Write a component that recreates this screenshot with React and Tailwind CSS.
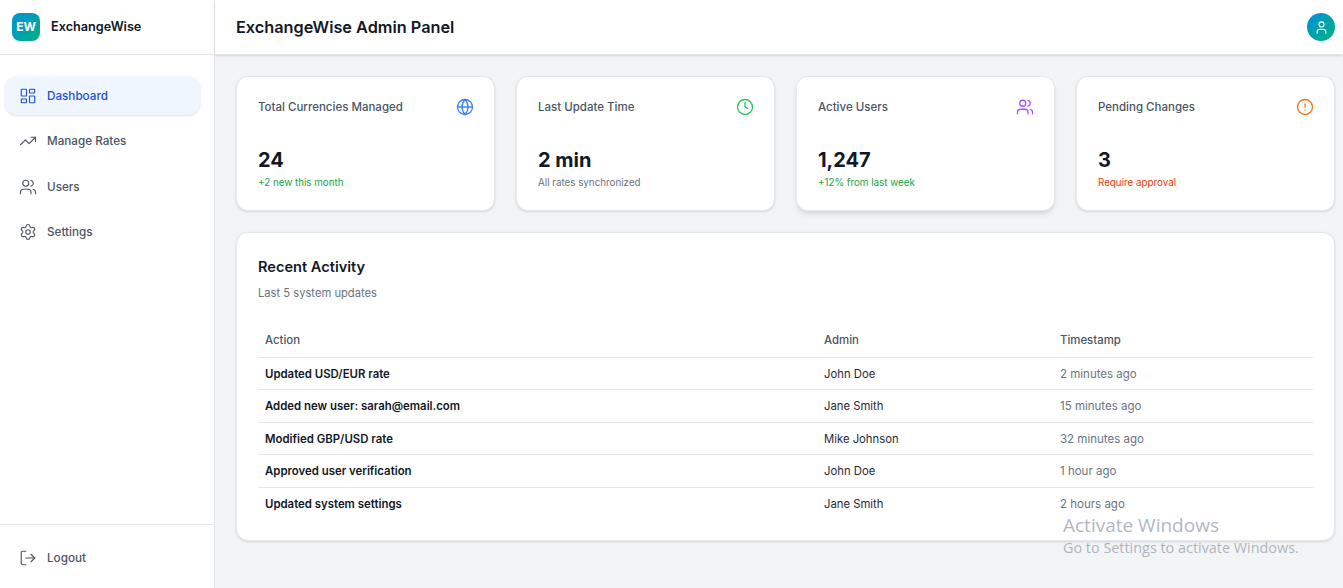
import React from 'react';
import { LayoutDashboard, TrendingUp, Users, Settings, LogOut, User, Globe, Clock, AlertCircle } from 'lucide-react';

const navItems = [
  { label: 'Dashboard', icon: LayoutDashboard, active: true },
  { label: 'Manage Rates', icon: TrendingUp },
  { label: 'Users', icon: Users },
  { label: 'Settings', icon: Settings },
];

const stats = [
  { title: 'Total Currencies Managed', value: '24', note: '+2 new this month', noteColor: 'text-[#16a34a]', icon: Globe, iconColor: 'text-[#3b82f6]', shadow: 'shadow' },
  { title: 'Last Update Time', value: '2 min', note: 'All rates synchronized', noteColor: 'text-[#6b7280]', icon: Clock, iconColor: 'text-[#22c55e]', shadow: 'shadow' },
  { title: 'Active Users', value: '1,247', note: '+12% from last week', noteColor: 'text-[#16a34a]', icon: Users, iconColor: 'text-[#a855f7]', shadow: 'shadow-md' },
  { title: 'Pending Changes', value: '3', note: 'Require approval', noteColor: 'text-[#ea3c0c]', icon: AlertCircle, iconColor: 'text-[#f97316]', shadow: 'shadow' },
];

const activity = [
  { action: 'Updated USD/EUR rate', admin: 'John Doe', time: '2 minutes ago' },
  { action: 'Added new user: sarah@email.com', admin: 'Jane Smith', time: '15 minutes ago' },
  { action: 'Modified GBP/USD rate', admin: 'Mike Johnson', time: '32 minutes ago' },
  { action: 'Approved user verification', admin: 'John Doe', time: '1 hour ago' },
  { action: 'Updated system settings', admin: 'Jane Smith', time: '2 hours ago' },
];

const App = () => {
  return (
    <div className="relative flex h-[588px] w-[1343px] overflow-hidden bg-[#f3f4f6] font-['Inter',sans-serif]">
      {/* Sidebar */}
      <aside className="flex w-[215px] shrink-0 flex-col border-r border-[#e5e7eb] bg-white">
        <div className="flex h-[55px] items-center gap-[11px] border-b border-[#e5e7eb] px-3">
          <div className="flex h-7 w-7 items-center justify-center rounded-lg bg-gradient-to-br from-[#0b8fdc] to-[#10b078] text-xs font-bold text-white">
            EW
          </div>
          <span className="text-[12.7px] font-semibold text-[#111827]">ExchangeWise</span>
        </div>
        <nav className="flex flex-1 flex-col gap-[6.5px] pl-[5px] pr-[14px] pt-[21px]">
          {navItems.map(({ label, icon: Icon, active }) => (
            <div
              key={label}
              className={`flex h-[39px] items-center gap-[10px] rounded-xl pl-[14px] text-[11.7px] font-medium ${
                active ? 'bg-[#eff6ff] text-[#1d4ed8] shadow-sm' : 'text-[#4b5563]'
              }`}
            >
              <Icon className="h-[18px] w-[18px]" strokeWidth={1.5} />
              <span className="pt-[2px]">{label}</span>
            </div>
          ))}
        </nav>
        <div className="flex h-[64px] items-center gap-[10px] border-t border-[#e5e7eb] pl-[19px] pt-[2px] text-[11.7px] font-medium text-[#4b5563]">
          <LogOut className="h-[18px] w-[18px]" strokeWidth={1.5} />
          <span className="pt-[3px]">Logout</span>
        </div>
      </aside>

      <div className="flex min-w-0 flex-1 flex-col">
        {/* Header */}
        <header className="flex h-[55px] shrink-0 items-center justify-between border-b border-[#e5e7eb] bg-white pl-[21px] pr-[8px] shadow-sm">
          <h1 className="text-[16.3px] font-semibold text-[#111827]">ExchangeWise Admin Panel</h1>
          <div className="flex h-7 w-7 items-center justify-center rounded-full bg-gradient-to-br from-[#0b8fdc] to-[#10b078] text-white">
            <User className="h-[15px] w-[15px]" strokeWidth={1.75} />
          </div>
        </header>

        {/* Content */}
        <main className="flex flex-col gap-[21px] pl-[21px] pr-[8px] pt-[21px]">
          <div className="grid grid-cols-4 gap-[21px]">
            {stats.map(({ title, value, note, noteColor, icon: Icon, iconColor, shadow }) => (
              <div key={title} className={`h-[135px] rounded-xl border border-[#e5e7eb] bg-white px-[21px] pt-[21px] ${shadow}`}>
                <div className="flex h-[18px] items-center justify-between">
                  <span className="pt-[2px] text-[11.5px] font-medium text-[#4b5563]">{title}</span>
                  <Icon className={`-mr-[1px] h-[18px] w-[18px] ${iconColor}`} strokeWidth={1.75} />
                </div>
                <div className="mt-[30px] text-xl leading-7 font-bold text-[#111827]">{value}</div>
                <div className={`mt-[1px] text-[9.8px] leading-[15px] ${noteColor}`}>{note}</div>
              </div>
            ))}
          </div>

          <section className="h-[309px] rounded-xl border border-[#e5e7eb] bg-white px-[21px] pt-[22px] shadow">
            <h2 className="text-[14.6px] leading-6 font-semibold text-[#111827]">Recent Activity</h2>
            <p className="mt-[4px] text-[11.2px] leading-5 text-[#6b7280]">Last 5 system updates</p>
            <table className="mt-[21px] w-full table-fixed text-[11.4px]">
              <colgroup>
                <col className="w-[559px]" />
                <col className="w-[236px]" />
                <col />
              </colgroup>
              <thead>
                <tr className="h-[33px] border-b border-[#e5e7eb] text-left">
                  <th className="px-[7px] font-medium text-[#4b5563]">Action</th>
                  <th className="px-[7px] font-medium text-[#4b5563]">Admin</th>
                  <th className="px-[7px] font-medium text-[#4b5563]">Timestamp</th>
                </tr>
              </thead>
              <tbody>
                {activity.map((row, i) => (
                  <tr key={row.action} className={`h-[32.5px] ${i < activity.length - 1 ? 'border-b border-[#e5e7eb]' : ''}`}>
                    <td className="px-[7px] pt-[2px] font-semibold text-[#111827]">{row.action}</td>
                    <td className="px-[7px] pt-[2px] text-[11.3px] text-[#1f2937]">{row.admin}</td>
                    <td className="px-[7px] pt-[2px] text-[11.5px] text-[#6b7280]">{row.time}</td>
                  </tr>
                ))}
              </tbody>
            </table>
          </section>
        </main>
      </div>

      {/* Windows watermark */}
      <div className="pointer-events-none absolute left-[1063px] top-[513px] font-['Open_Sans',sans-serif] text-[#9ca3af]/80">
        <div className="text-[19px] leading-6">Activate Windows</div>
        <div className="mt-[1px] text-[14.4px] leading-5">Go to Settings to activate Windows.</div>
      </div>
    </div>
  );
};

export default App;
